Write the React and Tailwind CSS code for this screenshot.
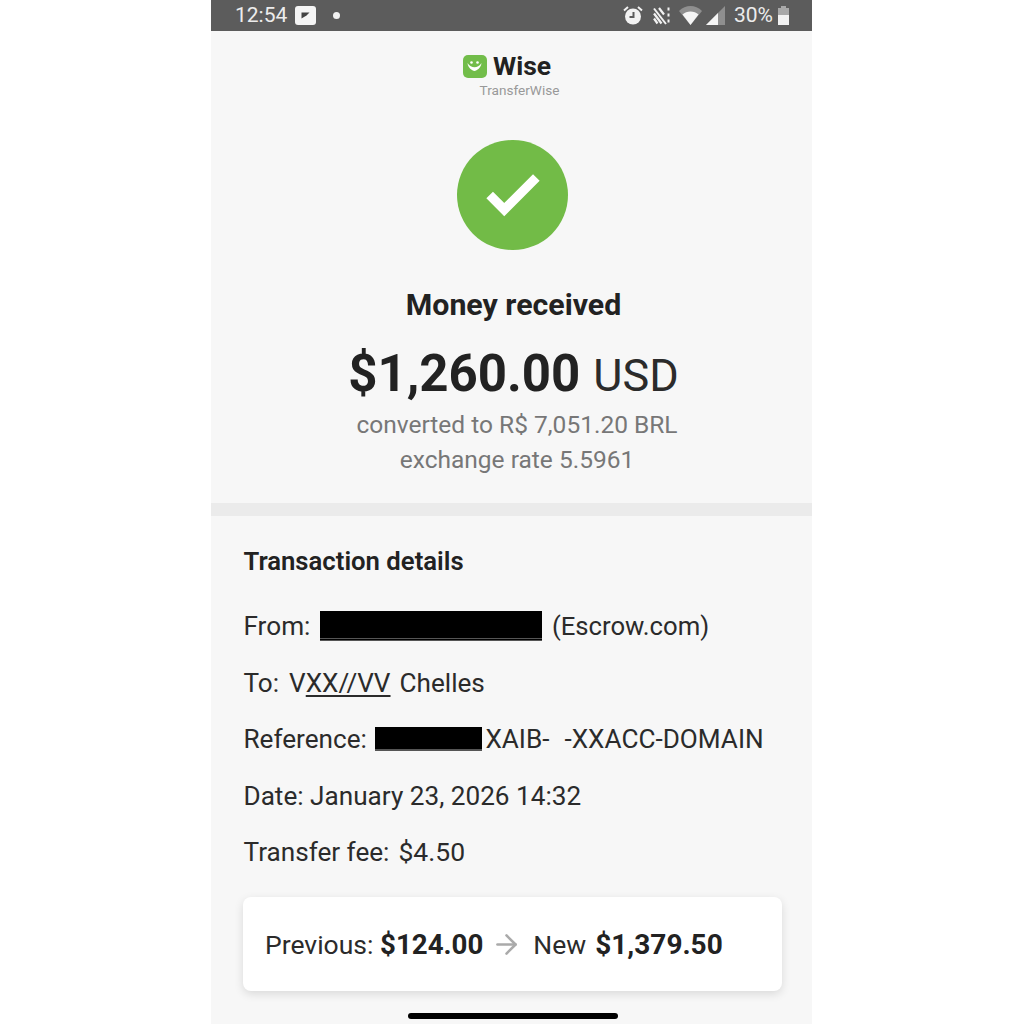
import { ArrowRight, Check } from "lucide-react";

function StatusBar() {
	return (
		<div className="flex items-center justify-between h-[31px] bg-[#5c5c5c] pl-[24px] pr-[23px] text-[#ececec] shrink-0">
			<div className="flex items-center">
				<span className="text-[21px] leading-none w-[52px]">12:54</span>
				<div className="ml-[8px] flex items-center justify-center w-[21px] h-[19px] rounded-[3px] bg-[#f5f5f5]">
					<svg width="9" height="7" viewBox="0 0 9 7">
						<path d="M0.5 0.5H8.5L5.5 3.5L0.5 6.5Z" fill="#444" />
					</svg>
				</div>
				<div className="ml-[17px] w-[7px] h-[7px] rounded-full bg-[#f2f2f2]" />
			</div>
			<div className="flex items-center">
				<svg width="20" height="19" viewBox="0 0 20 19" fill="none">
					<circle cx="10" cy="10.500" r="8" fill="#f2f2f2" />
					<path d="M1 4.500L5 1M19 4.500L15 1" stroke="#f2f2f2" strokeWidth="2" />
					<path d="M10.500 6V11H6.500" stroke="#5c5c5c" strokeWidth="2" fill="none" />
				</svg>
				<svg className="ml-[10px]" width="18" height="18" viewBox="0 0 18 18" fill="none">
					<path d="M1 1.500L13 17" stroke="#f2f2f2" strokeWidth="2" />
					<path d="M1 6.500L8.500 16.500M1 11.500L4.500 16.500M6 1L11 7.500" stroke="#f2f2f2" strokeWidth="2.200" />
					<path d="M15.500 0.500V3.500M15.500 6.500V9.500M15.500 12.500V15.500" stroke="#f2f2f2" strokeWidth="2" />
				</svg>
				<svg className="ml-[8px]" width="23" height="19" viewBox="0 0 23 19">
					<path d="M0 5C6.500 -1.600 16.500 -1.600 23 5L11.500 19Z" fill="#8f8f8f" />
					<path d="M3.500 8.500C7.500 4.500 15.500 4.500 19.500 8.500L11.500 19Z" fill="#f5f5f5" />
				</svg>
				<svg className="ml-[4px]" width="19" height="19" viewBox="0 0 19 19">
					<path d="M0 19L19 0V19Z" fill="#8f8f8f" />
					<path d="M0 19L12 7V19Z" fill="#f5f5f5" />
				</svg>
				<span className="ml-[9px] text-[21px] leading-none">30%</span>
				<div className="ml-[5px] flex flex-col items-center w-[11px] h-[19px]">
					<div className="w-[5px] h-[2px] bg-[#a8a8a8]" />
					<div className="w-[11px] h-[7px] bg-[#a8a8a8]" />
					<div className="w-[11px] h-[10px] bg-[#f2f2f2]" />
				</div>
			</div>
		</div>
	);
}

function Logo() {
	return (
		<div className="flex flex-col items-center pt-[21px]">
			<div className="flex items-center gap-[6px] pr-[9px]">
				<div className="flex items-center justify-center w-[24px] h-[23px] rounded-[5px] bg-[#72bd4a]">
					<svg width="17" height="12" viewBox="0 0 17 12" fill="none">
						<path d="M1.500 3C2 8 6 10.500 8.500 11C11 10.500 15 8 15.500 3C13.500 6 11 7.200 8.500 7.200C6 7.200 3.500 6 1.500 3Z" fill="#fff" />
						<circle cx="5.500" cy="2.500" r="1.300" fill="#fff" />
						<circle cx="11.500" cy="2.500" r="1.300" fill="#fff" />
					</svg>
				</div>
				<span className="text-[26.500px] leading-[28px] font-bold text-[#222]">Wise</span>
			</div>
			<span className="ml-[16px] mt-[2px] text-[13.600px] leading-[16px] text-[#999]">TransferWise</span>
		</div>
	);
}

function Row({ children }) {
	return <div className="flex items-center h-[28px] text-[26.150px] leading-[28px] text-[#2b2b2b] whitespace-pre">{children}</div>;
}

export default function App() {
	return (
		<div className="flex justify-center h-[1024px] overflow-hidden bg-white font-['Roboto',sans-serif]">
			<div className="relative flex flex-col w-[601px] h-full bg-[#f7f7f7] ml-[-1px]">
				<StatusBar />
				<Logo />

				<div className="flex flex-col items-center">
					<div className="mt-[42px] ml-[2px] flex items-center justify-center w-[111px] h-[110px] rounded-full bg-[#72bb47]">
						<Check size={70} color="#fff" strokeWidth={3.2} strokeLinecap="butt" strokeLinejoin="miter" />
					</div>
					<h1 className="mt-[38px] ml-[4px] text-[30.300px] leading-[34px] font-bold text-[#222]">Money received</h1>
					<div className="mt-[22px] ml-[4px] flex items-baseline gap-[13px] leading-[60px]">
						<span className="text-[51px] font-bold text-[#222]">$1,260.00</span>
						<span className="text-[45px] text-[#2b2b2b]">USD</span>
					</div>
					<p className="ml-[11px] mt-[1px] text-[24.500px] leading-[35px] text-[#777] text-center">
						converted to R$ 7,051.20 BRL
						<br />
						exchange rate 5.5961
					</p>
				</div>

				<div className="mt-[26px] h-[13px] bg-[#ebebeb] shrink-0" />

				<div className="flex flex-col px-[32px] pt-[31px]">
					<h2 className="pl-[0.5px] text-[25.700px] leading-[28px] font-semibold text-[#222]">Transaction details</h2>
					<div className="mt-[37px] pl-[0.5px] flex flex-col gap-[28.500px]">
						<Row>
							<span>From:</span>
							<span className="ml-[9.500px] w-[222px] h-[30px] bg-black border-b-[3px] border-double border-b-[#555]" />
							<span className="ml-[10px] text-[25.700px]">(Escrow.com)</span>
						</Row>
						<Row>
							<span>To:</span>
							<span className="ml-[10px]">V</span>
							<span className="underline underline-offset-[3px] decoration-[1.500px]">XX//VV</span>
							<span className="ml-[9px]">Chelles</span>
						</Row>
						<Row>
							<span>Reference:</span>
							<span className="ml-[8.500px] w-[107px] h-[24px] bg-black border-b-[2px] border-b-[#555]" />
							<span className="ml-[3px]">XAIB-</span>
							<span className="ml-[15px]">-XXACC-DOMAIN</span>
						</Row>
						<Row>Date: January 23, 2026 14:32</Row>
						<Row>
							<span>Transfer fee:</span>
							<span className="ml-[9px] text-[26.500px]">$4.50</span>
						</Row>
					</div>

					<div className="mt-[31px] flex items-center h-[94px] w-[539px] pl-[22px] pt-[1px] rounded-[8px] bg-white shadow-[0_3px_10px_rgba(0,0,0,0.12)] text-[26.500px] text-[#2b2b2b] whitespace-pre">
						<span>Previous: </span>
						<span className="font-bold text-[#222] text-[27.700px]">$124.00</span>
						<ArrowRight className="ml-[8px]" size={31} color="#aaa" strokeWidth={2} />
						<span className="ml-[11px]">New</span>
						<span className="ml-[9px] font-bold text-[#222] text-[28px]">$1,379.50</span>
					</div>
				</div>

				<div className="absolute left-[197px] bottom-[5px] w-[210px] h-[6px] rounded-full bg-black" />
			</div>
		</div>
	);
}
